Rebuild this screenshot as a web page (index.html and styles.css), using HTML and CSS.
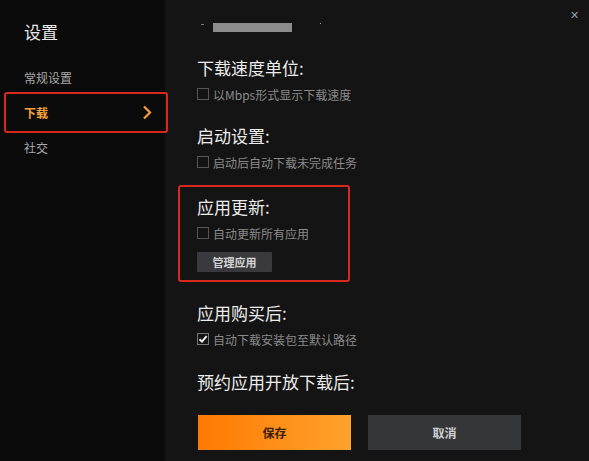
FILE: index.html
```html
<!DOCTYPE html>
<html lang="zh-CN">
<head>
<meta charset="utf-8">
<title>设置</title>
<link rel="stylesheet" href="styles.css">
</head>
<body>
<div class="window">
  <aside class="sidebar">
    <div class="side-title">设置</div>
    <nav class="nav">
      <div class="nav-item">常规设置</div>
      <div class="nav-item active">
        <span>下载</span>
        <svg class="chev" width="10" height="15" viewBox="0 0 10 15"><path d="M2 1.5 L8 7.5 L2 13.5" fill="none" stroke="#f5a03a" stroke-width="2.2"/></svg>
      </div>
      <div class="nav-item">社交</div>
    </nav>
  </aside>
  <main class="main">
    <div class="topbar">
      <span class="dot"></span>
      <span class="blur"></span>
      <span class="dot dot2"></span>
    </div>
    <section class="sec first">
      <h2 class="head">下载速度单位:</h2>
      <label class="row"><span class="box"></span>以Mbps形式显示下载速度</label>
    </section>
    <section class="sec s2">
      <h2 class="head">启动设置:</h2>
      <label class="row"><span class="box"></span>启动后自动下载未完成任务</label>
    </section>
    <section class="sec highlight">
      <h2 class="head">应用更新:</h2>
      <label class="row"><span class="box"></span>自动更新所有应用</label>
      <button class="manage">管理应用</button>
    </section>
    <section class="sec s4">
      <h2 class="head">应用购买后:</h2>
      <label class="row"><span class="box checked"><svg width="10" height="10" viewBox="0 0 10 10"><path d="M1.5 5.2 L4 7.6 L8.6 2.2" fill="none" stroke="#f2f2f2" stroke-width="2"/></svg></span>自动下载安装包至默认路径</label>
    </section>
    <section class="sec s5">
      <h2 class="head">预约应用开放下载后:</h2>
    </section>
    <div class="actions">
      <button class="btn save">保存</button>
      <button class="btn cancel">取消</button>
    </div>
  </main>
  <div class="close">✕</div>
</div>
</body>
</html>
```

FILE: styles.css
```css
* { box-sizing: border-box; }
html, body {
  margin: 0;
  padding: 0;
  background: #141414;
  font-family: "Noto Sans CJK SC", "Noto Sans", sans-serif;
}
.window {
  position: relative;
  display: flex;
  width: 589px;
  height: 461px;
  background: #141414;
  overflow: hidden;
}
.sidebar {
  width: 165px;
  flex: none;
  background: #0b0b0b;
  padding-top: 20px;
}
.side-title {
  padding-left: 24px;
  font-size: 17px;
  line-height: 24px;
  color: #e8e8e8;
}
.nav {
  margin-top: 16px;
  display: flex;
  flex-direction: column;
}
.nav-item {
  height: 35px;
  line-height: 35px;
  padding-left: 24px;
  font-size: 12px;
  color: #a9a9a9;
}
.nav-item.active {
  height: 41px;
  line-height: 37px;
  margin: -3px -3px -3px 4px;
  padding-left: 18px;
  padding-right: 14px;
  border: 2px solid #d8291f;
  border-radius: 3px;
  color: #f5a03a;
  font-weight: bold;
  display: flex;
  align-items: center;
  justify-content: space-between;
  position: relative;
  z-index: 1;
}
.chev { display: block; }
.main {
  flex: 1;
  display: flex;
  flex-direction: column;
  padding-left: 32px;
  padding-top: 23px;
}
.topbar {
  display: flex;
  align-items: flex-start;
  height: 9px;
}
.dot {
  width: 3px;
  height: 1px;
  background: #777;
  margin-top: 1px;
  margin-left: 4px;
}
.blur {
  width: 79px;
  height: 9px;
  background: #8c8c8c;
  margin-left: 9px;
}
.dot2 {
  width: 1px;
  margin-left: 28px;
  margin-top: 0;
  background: #999;
}
.sec { display: flex; flex-direction: column; align-items: flex-start; }
.first { margin-top: 24px; }
.s2 { margin-top: 21px; }
.highlight {
  margin-top: 14px;
  margin-left: -19px;
  width: 172px;
  border: 2px solid #d8291f;
  border-radius: 3px;
  padding: 8px 0 8px 17px;
}
.s4 { margin-top: 19px; }
.s5 { margin-top: 22px; }
.head {
  margin: 0;
  font-size: 17px;
  font-weight: normal;
  line-height: 24px;
  color: #ececec;
  white-space: nowrap;
}
.row {
  margin-top: 5px;
  display: flex;
  align-items: center;
  height: 18px;
  font-size: 12px;
  color: #8a8a8a;
  white-space: nowrap;
}
.box {
  width: 12px;
  height: 12px;
  border: 1px solid #555;
  margin-right: 4px;
  display: flex;
  align-items: center;
  justify-content: center;
}
.box.checked { border-color: #777; }
.box svg { display: block; }
.manage {
  margin-top: 10px;
  width: 75px;
  height: 20px;
  padding: 0;
  border: none;
  border-radius: 1px;
  background: #3a3a3e;
  color: #d4d4d4;
  font-family: inherit;
  font-size: 11px;
  font-weight: bold;
}
.actions {
  margin-top: 21px;
  margin-left: 1px;
  display: flex;
  gap: 17px;
}
.btn {
  width: 153px;
  height: 35px;
  border: none;
  padding: 0;
  font-family: inherit;
  font-size: 12px;
  font-weight: bold;
}
.save {
  background: linear-gradient(90deg, #ff7a00, #ffa22e);
  color: #3b2005;
}
.cancel {
  background: #35363a;
  color: #cfcfcf;
}
.close {
  position: absolute;
  right: 10px;
  top: 6px;
  font-size: 11px;
  line-height: 16px;
  color: #9a9a9a;
}
```
